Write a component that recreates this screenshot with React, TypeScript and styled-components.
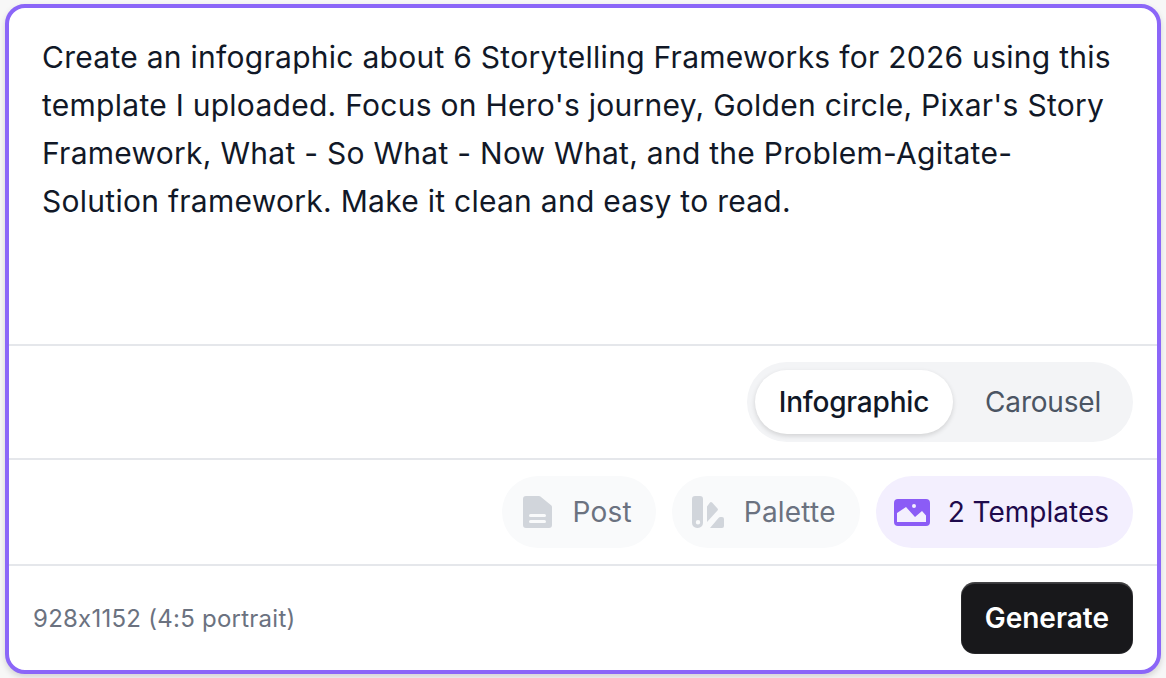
import React from 'react';
import styled, {createGlobalStyle} from 'styled-components';

const GlobalStyle = createGlobalStyle`
  html, body {
    margin: 0;
    padding: 0;
    height: 100%;
    background: #f7f7f7;
  }
  body {
    font-family: Inter, "Liberation Sans", sans-serif;
  }
`

const Page = styled.div`
  width: 1166px;
  height: 678px;
  padding: 4px 5px;
  box-sizing: border-box;
  overflow: hidden;
`

const Card = styled.div`
  height: 670px;
  box-sizing: border-box;
  background: #fff;
  border: 4px solid #8b66f8;
  border-radius: 20px;
  display: flex;
  flex-direction: column;
  box-shadow: 0 3px 6px rgba(0, 0, 0, 0.15);
`

const Prompt = styled.p`
  margin: 0;
  height: 336px;
  box-sizing: border-box;
  padding: 25px 33px 0;
  font-size: 30px;
  letter-spacing: 0.27px;
  line-height: 48px;
  color: #111827;
`

const Row = styled.div<{$height: number}>`
  height: ${p => p.$height}px;
  box-sizing: border-box;
  border-top: 2px solid #e5e7eb;
  padding: 0 24px;
  display: flex;
  align-items: center;
  justify-content: flex-end;
  gap: 16px;
`

const FooterRow = styled(Row)`
  justify-content: space-between;
`

const Segmented = styled.div`
  display: flex;
  align-items: center;
  gap: 8px;
  height: 80px;
  padding: 8px;
  box-sizing: border-box;
  border-radius: 40px;
  background: #f3f4f6;
`

const Segment = styled.div<{$active?: boolean}>`
  height: 64px;
  padding: 0 24px;
  display: flex;
  align-items: center;
  border-radius: 32px;
  font-size: 28px;
  font-weight: ${p => (p.$active ? 500 : 400)};
  letter-spacing: -0.2px;
  color: ${p => (p.$active ? '#111827' : '#4b5563')};
  background: ${p => (p.$active ? '#fff' : 'transparent')};
  box-shadow: ${p => (p.$active ? '0 2px 5px rgba(0, 0, 0, 0.14)' : 'none')};
`

const Chip = styled.div<{$active?: boolean}>`
  height: 72px;
  box-sizing: border-box;
  padding: 0 24px 0 ${p => (p.$active ? 18 : 20)}px;
  display: flex;
  align-items: center;
  gap: ${p => (p.$active ? 18 : 20)}px;
  border-radius: 36px;
  font-size: 28px;
  font-weight: 400;
  letter-spacing: ${p => (p.$active ? '0' : '0.2px')};
  color: ${p => (p.$active ? '#1e0a4c' : '#6b7280')};
  background: ${p => (p.$active ? '#f3effe' : '#f9fafb')};
`

const Meta = styled.span`
  font-size: 24px;
  letter-spacing: 0.25px;
  color: #6b7280;
`

// Inter's contextual alternates would turn the x between digits into a multiplication sign
const Dimensions = styled.span`
  font-feature-settings: "calt" 0;
`

const GenerateButton = styled.button`
  height: 72px;
  padding: 0 24px;
  border: none;
  border-radius: 14px;
  background: #18181b;
  color: #fff;
  font-family: inherit;
  font-size: 28px;
  font-weight: 600;
  box-shadow: inset 0 2px 0 rgba(255, 255, 255, 0.14), inset 0 0 0 1px rgba(255, 255, 255, 0.06);
`

const PostIcon = () => (
    <svg width="31" height="32" viewBox="-1 0 31 32">
        <path
            fill="#d1d5db"
            fillRule="evenodd"
            d="M3 0H16a2 2 0 0 1 1.400 0.600L28.400 9.600a2 2 0 0 1 0.600 1.400V29a3 3 0 0 1-3 3H3a3 3 0 0 1-3-3V3a3 3 0 0 1 3-3ZM7.500 18a1.500 1.500 0 0 0 0 3H21.500a1.500 1.500 0 0 0 0-3ZM7.500 24a1.500 1.500 0 0 0 0 3H21.500a1.500 1.500 0 0 0 0-3Z"
        />
    </svg>
)

const PaletteIcon = () => (
    <svg width="32" height="32" viewBox="0 0 32 32">
        <path
            fill="#d1d5db"
            fillRule="evenodd"
            d="M3 0H8a3 3 0 0 1 3 3V27a5 5 0 0 1-5 5H5a5 5 0 0 1-5-5V3a3 3 0 0 1 3-3ZM6 24a2.200 2.200 0 1 0 0 4.400a2.200 2.200 0 0 0 0-4.400Z"
        />
        <path fill="#d1d5db" d="M15 10.500 17.800 6.800a1.500 1.500 0 0 1 2.300-0.200L25.500 12.500a1.500 1.500 0 0 1 0 2L15 26Z" />
        <path fill="#d1d5db" d="M18 32 26.500 22a2.500 2.500 0 0 1 2-1H30a2 2 0 0 1 2 2V30a2 2 0 0 1-2 2Z" />
    </svg>
)

const TemplatesIcon = () => (
    <svg width="36" height="27" viewBox="0 0 36 27">
        <path
            fill="#8b5cf6"
            fillRule="evenodd"
            d="M4 0H32a4 4 0 0 1 4 4V23a4 4 0 0 1-4 4H4a4 4 0 0 1-4-4V4a4 4 0 0 1 4-4ZM20 5a2 2 0 1 0 0 4a2 2 0 0 0 0-4ZM3 14V23H32V16.500L28 12 21 18 12 8Z"
        />
    </svg>
)

export default function App() {
    return (
        <Page>
            <GlobalStyle/>
            <Card>
                <Prompt>
                    Create an infographic about 6 Storytelling Frameworks for 2026 using this template I uploaded. Focus
                    on Hero's journey, Golden circle, Pixar's Story Framework, What - So What - Now What, and the
                    Problem-Agitate-Solution framework. Make it clean and easy to read.
                </Prompt>
                <Row $height={114}>
                    <Segmented>
                        <Segment $active>Infographic</Segment>
                        <Segment>Carousel</Segment>
                    </Segmented>
                </Row>
                <Row $height={106}>
                    <Chip><PostIcon/>Post</Chip>
                    <Chip><PaletteIcon/>Palette</Chip>
                    <Chip $active><TemplatesIcon/>2 Templates</Chip>
                </Row>
                <FooterRow $height={106}>
                    <Meta><Dimensions>928x1152</Dimensions> (4:5 portrait)</Meta>
                    <GenerateButton>Generate</GenerateButton>
                </FooterRow>
            </Card>
        </Page>
    );
}
